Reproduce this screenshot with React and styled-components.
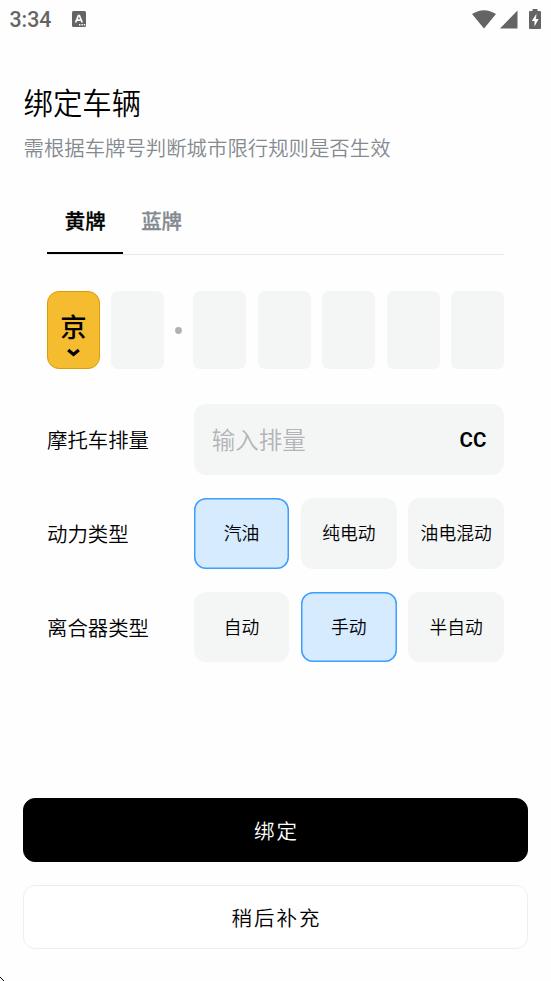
import React, { useState } from "react";
import styled, { createGlobalStyle } from "styled-components";

const GlobalStyle = createGlobalStyle`
  * {
    box-sizing: border-box;
  }

  body {
    margin: 0;
    background: #fefefe;
    font-family: Roboto, "Noto Sans CJK SC", sans-serif;
    font-weight: 350;
    color: #000;
  }

  button,
  input {
    font-family: inherit;
    font-weight: inherit;
  }
`;

const Screen = styled.div`
  position: relative;
  width: 551px;
  height: 981px;
  display: flex;
  flex-direction: column;
  overflow: hidden;
`;

const StatusBar = styled.div`
  height: 38px;
  padding: 0 10px 0 9.5px;
  display: flex;
  align-items: center;
  justify-content: space-between;
  color: #646464;
`;

const StatusGroup = styled.div`
  display: flex;
  align-items: center;
`;

const Clock = styled.span`
  width: 62.5px;
  padding-top: 2px;
  font-size: 21.3px;
  font-weight: 500;
  line-height: 36px;
`;

const StatusIcon = styled.svg`
  display: block;
  margin-left: ${(props) => props.$left || 0}px;
`;

const Header = styled.div`
  height: 132px;
  padding: 43.5px 23.5px 0;
`;

const Title = styled.h1`
  margin: 0;
  font-size: 29.4px;
  font-weight: inherit;
  line-height: 44px;
`;

const SubTitle = styled.p`
  margin: 8px 0 0;
  font-size: 20.4px;
  line-height: 30px;
  color: #858a90;
`;

const Content = styled.div`
  flex: 1;
  padding: 14px 47px 0;
`;

const Tabs = styled.div`
  height: 71px;
  display: flex;
  border-bottom: 1.5px solid #e8e8e8;
`;

const Tab = styled.button`
  width: 76.4px;
  height: 70px;
  padding: 5px 0 0;
  border: none;
  border-bottom: 2px solid ${(props) => (props.$active ? "#000" : "transparent")};
  background: none;
  font-size: 20.4px;
  font-weight: 500;
  line-height: 66px;
  color: ${(props) => (props.$active ? "#000" : "#858a90")};
  -webkit-text-stroke: 0.3px currentColor;
`;

const Plate = styled.div`
  margin-top: 36px;
  height: 78px;
  display: flex;
  align-items: center;
  justify-content: space-between;
`;

const PlateBox = styled.div`
  width: 52.7px;
  height: 78px;
  border-radius: 7px;
  background: #f4f6f6;
`;

const Province = styled(PlateBox)`
  padding-top: 16px;
  display: flex;
  flex-direction: column;
  align-items: center;
  border: 1.5px solid #d99c09;
  border-radius: 12px;
  background: #f5bc2f;
  font-size: 26.4px;
  font-weight: 500;
  line-height: 40px;
`;

const Dot = styled.svg`
  display: block;
  margin: 0 -0.5px 0 -0.8px;
`;

const Form = styled.div`
  margin-top: 35.3px;
  display: flex;
  flex-direction: column;
  gap: 23.5px;
`;

const Row = styled.div`
  height: 70.4px;
  display: grid;
  grid-template-columns: 146.7px minmax(0, 1fr);
  align-items: center;
`;

const Label = styled.span`
  padding-top: 3px;
  font-size: 20.4px;
  line-height: 30px;
`;

const Field = styled.label`
  height: 70.4px;
  padding: 0 17.6px 0 18px;
  display: flex;
  align-items: center;
  border-radius: 12px;
  background: #f4f6f6;
`;

const Input = styled.input`
  flex: 1;
  min-width: 0;
  height: 44px;
  padding: 4px 0 0;
  border: none;
  outline: none;
  background: none;
  font-size: 23.5px;

  &::placeholder {
    color: #b2b4b6;
    opacity: 1;
  }
`;

const Unit = styled.span`
  padding-top: 2px;
  font-size: 20.5px;
  font-weight: 600;
`;

const Options = styled.div`
  display: grid;
  grid-template-columns: repeat(3, 1fr);
  gap: 11.75px;
`;

const Option = styled.button`
  height: 70.4px;
  padding: 0 0 2px;
  border: none;
  border-radius: 12px;
  background: ${(props) => (props.$active ? "#d7ebff" : "#f4f6f6")};
  box-shadow: ${(props) => (props.$active ? "inset 0 0 0 1.5px #3b9fff" : "none")};
  font-size: 17.8px;
  color: #000;
  white-space: nowrap;
`;

const Footer = styled.div`
  padding: 0 23.4px 32.4px;
  display: flex;
  flex-direction: column;
  gap: 23.3px;
`;

const Button = styled.button`
  height: 63.5px;
  padding: 0 0 0 2px;
  border: 1px solid ${(props) => (props.$primary ? "#000" : "#eee")};
  border-radius: 12px;
  background: ${(props) => (props.$primary ? "#000" : "#fff")};
  color: ${(props) => (props.$primary ? "#fff" : "#000")};
  font-size: 20.5px;
  letter-spacing: 2px;
`;

const Corner = styled.svg`
  position: absolute;
  left: 0;
  bottom: 0;
`;

const OptionGroup = ({ options, value, onChange }) => (
  <Options>
    {options.map((item) => (
      <Option key={item} $active={item === value} onClick={() => onChange(item)}>
        {item}
      </Option>
    ))}
  </Options>
);

const App = () => {
  const [tab, setTab] = useState("黄牌");
  const [power, setPower] = useState("汽油");
  const [clutch, setClutch] = useState("手动");

  return (
    <Screen>
      <GlobalStyle />
      <StatusBar>
        <StatusGroup>
          <Clock>3:34</Clock>
          <StatusIcon width="14" height="16" viewBox="0 0 14 16">
            <rect width="14" height="16" rx="1.5" fill="#646464" />
            <path d="M3.6 11.5 6.4 4.5h1L10.2 11.5M4.8 9.2h4.2" fill="none" stroke="#fff" strokeWidth="1.7" />
            <path d="M7 13.8h1.4M9.4 13.8h1.4M11.8 13.8h1.4" stroke="#fff" strokeWidth="1.4" />
          </StatusIcon>
        </StatusGroup>
        <StatusGroup>
          <StatusIcon width="24" height="19" viewBox="0 0 24 19">
            <path d="M0 4Q12-3.6 24 4L12 18.5Z" fill="#646464" />
          </StatusIcon>
          <StatusIcon $left={4} width="18" height="19" viewBox="0 0 18 19">
            <path d="M17.5 .5V18.5H0Z" fill="#646464" />
          </StatusIcon>
          <StatusIcon $left={11} width="12" height="20" viewBox="0 0 12 20">
            <path d="M3.5 2V0h5v2H11q1 0 1 1v16q0 1-1 1H1q-1 0-1-1V3q0-1 1-1Z" fill="#646464" />
            <path d="M7.4 4.8 2.8 12h2.7v5.6L9.6 10H7Z" fill="#fff" />
          </StatusIcon>
        </StatusGroup>
      </StatusBar>

      <Header>
        <Title>绑定车辆</Title>
        <SubTitle>需根据车牌号判断城市限行规则是否生效</SubTitle>
      </Header>

      <Content>
        <Tabs>
          {["黄牌", "蓝牌"].map((item) => (
            <Tab key={item} $active={item === tab} onClick={() => setTab(item)}>
              {item}
            </Tab>
          ))}
        </Tabs>

        <Plate>
          <Province>
            京
            <svg width="13" height="9" viewBox="0 0 13 9">
              <path d="M1.2 2 6.5 6.5 11.8 2" fill="none" stroke="#000" strokeWidth="3.2" />
            </svg>
          </Province>
          <PlateBox />
          <Dot width="7" height="7" viewBox="0 0 7 7">
            <circle cx="3.5" cy="3.5" r="3.4" fill="#adb2b5" />
          </Dot>
          <PlateBox />
          <PlateBox />
          <PlateBox />
          <PlateBox />
          <PlateBox />
        </Plate>

        <Form>
          <Row>
            <Label>摩托车排量</Label>
            <Field>
              <Input placeholder="输入排量" />
              <Unit>CC</Unit>
            </Field>
          </Row>
          <Row>
            <Label>动力类型</Label>
            <OptionGroup options={["汽油", "纯电动", "油电混动"]} value={power} onChange={setPower} />
          </Row>
          <Row>
            <Label>离合器类型</Label>
            <OptionGroup options={["自动", "手动", "半自动"]} value={clutch} onChange={setClutch} />
          </Row>
        </Form>
      </Content>

      <Footer>
        <Button $primary>绑定</Button>
        <Button>稍后补充</Button>
      </Footer>

      <Corner width="4" height="4" viewBox="0 0 4 4">
        <path d="M0 0 4 4" stroke="#000" strokeWidth="1" />
      </Corner>
    </Screen>
  );
};

export default App;
